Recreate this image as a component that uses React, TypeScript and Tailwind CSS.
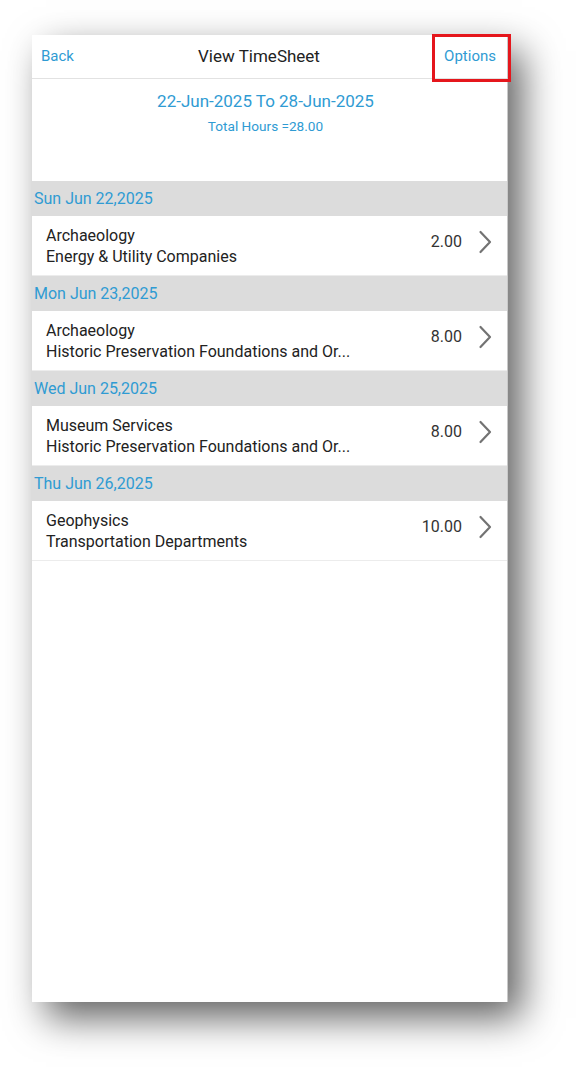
import React from "react";

const BLUE = "#2f9bd3";

type Entry = { day: string; task: string; client: string; hours: string };

const entries: Entry[] = [
  { day: "Sun Jun 22,2025", task: "Archaeology", client: "Energy & Utility Companies", hours: "2.00" },
  { day: "Mon Jun 23,2025", task: "Archaeology", client: "Historic Preservation Foundations and Or...", hours: "8.00" },
  { day: "Wed Jun 25,2025", task: "Museum Services", client: "Historic Preservation Foundations and Or...", hours: "8.00" },
  { day: "Thu Jun 26,2025", task: "Geophysics", client: "Transportation Departments", hours: "10.00" },
];

function Chevron() {
  return (
    <svg width="14" height="24" viewBox="0 0 14 24" fill="none" className="shrink-0">
      <path d="M2.5 2 L12 12 L2.5 22" stroke="#737373" strokeWidth="2.2" strokeLinecap="round" strokeLinejoin="round" />
    </svg>
  );
}

export default function App() {
  return (
    <div
      className="relative w-[577px] h-[1067px] bg-white overflow-hidden"
      style={{ fontFamily: "Roboto, 'Noto Sans', Arial, sans-serif" }}
    >
      <div className="ml-[32px] mt-[35px] w-[476px] h-[967px] bg-white flex flex-col shadow-[14px_16px_36px_rgba(0,0,0,0.62)] border-r border-[#c9c9c9]">
        {/* Header */}
        <div className="h-[44px] shrink-0 flex items-center border-b border-[#e2e2e2] px-[9px]">
          <span className="text-[15px] w-[80px]" style={{ color: BLUE }}>Back</span>
          <span className="flex-1 text-center text-[17px] text-[#222] pr-[21px]">View TimeSheet</span>
          <span className="text-[15px] w-[80px] text-right pr-[2px]" style={{ color: BLUE }}>Options</span>
        </div>
        {/* Summary */}
        <div className="h-[102px] shrink-0 flex flex-col items-center pt-[12px]">
          <div className="text-[17px] leading-[20px] pr-[8px]" style={{ color: BLUE }}>
            22-Jun-2025 To 28-Jun-2025
          </div>
          <div className="text-[13.6px] leading-[18px] mt-[6px] pr-[8px]" style={{ color: BLUE }}>
            Total Hours =28.00
          </div>
        </div>
        {/* List */}
        <div className="flex flex-col">
          {entries.map((e, i) => (
            <div key={i} className="flex flex-col">
              <div className="h-[35px] bg-[#dcdcdc] flex items-center px-[2px]">
                <span className="text-[16px]" style={{ color: BLUE }}>{e.day}</span>
              </div>
              <div className="h-[60px] flex items-center border-b border-[#ececec] pl-[14px] pr-[15px]">
                <div className="flex-1 flex flex-col text-[16px] leading-[21px] text-[#222]">
                  <span>{e.task}</span>
                  <span>{e.client}</span>
                </div>
                <span className="text-[16px] text-[#333] mr-[16px] pb-[8px]">{e.hours}</span>
                <div className="pb-[8px]"><Chevron /></div>
              </div>
            </div>
          ))}
        </div>
      </div>
      {/* Highlight box */}
      <div className="absolute left-[432px] top-[34px] w-[79px] h-[48px] border-[3px] border-[#e5161c]" />
    </div>
  );
}
